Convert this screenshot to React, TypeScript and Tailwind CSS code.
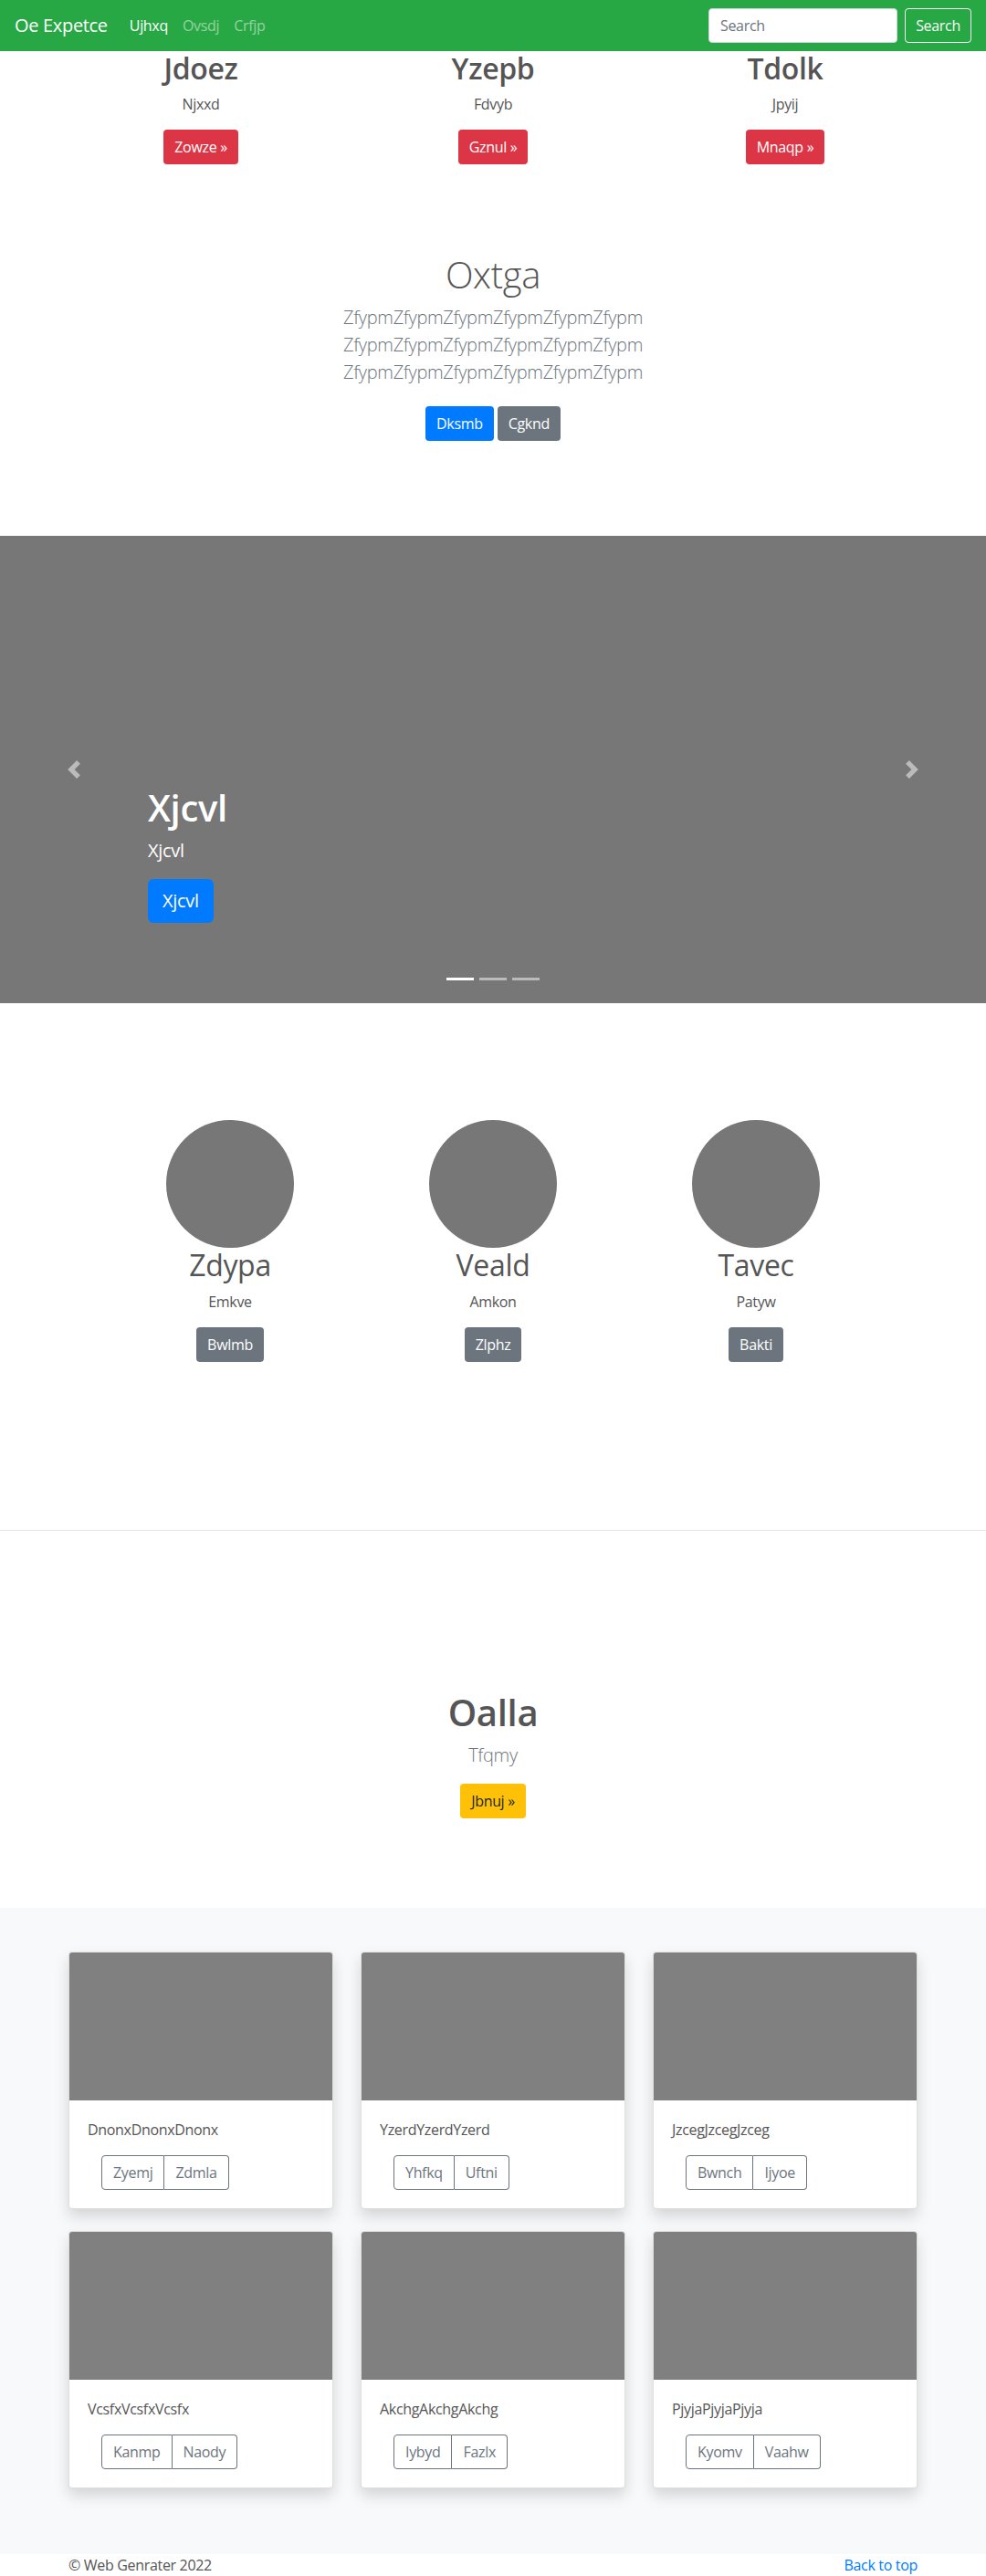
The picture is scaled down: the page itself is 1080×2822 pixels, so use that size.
import React from "react";

const cols = [
  { t: "Jdoez", s: "Njxxd", b: "Zowze" },
  { t: "Yzepb", s: "Fdvyb", b: "Gznul" },
  { t: "Tdolk", s: "Jpyij", b: "Mnaqp" },
];

const circles = [
  { t: "Zdypa", s: "Emkve", b: "Bwlmb" },
  { t: "Veald", s: "Amkon", b: "Zlphz" },
  { t: "Tavec", s: "Patyw", b: "Bakti" },
];

const cards = [
  { t: "DnonxDnonxDnonx", a: "Zyemj", b: "Zdmla" },
  { t: "YzerdYzerdYzerd", a: "Yhfkq", b: "Uftni" },
  { t: "JzcegJzcegJzceg", a: "Bwnch", b: "Ijyoe" },
  { t: "VcsfxVcsfxVcsfx", a: "Kanmp", b: "Naody" },
  { t: "AkchgAkchgAkchg", a: "Iybyd", b: "Fazlx" },
  { t: "PjyjaPjyjaPjyja", a: "Kyomv", b: "Vaahw" },
];

function Nav() {
  return (
    <nav className="h-[56px] bg-[#28a745] flex items-center px-4">
      <span className="text-[20px] leading-[30px] text-white mr-4">Oe Expetce</span>
      <ul className="flex items-center">
        <li className="px-2 text-white font-medium">Ujhxq</li>
        <li className="px-2 text-white/50">Ovsdj</li>
        <li className="px-2 text-white/50">Crfjp</li>
      </ul>
      <div className="ml-auto flex items-center">
        <div className="w-[207px] h-[38px] rounded bg-white border border-[#ced4da] px-3 flex items-center text-[#6c757d]">
          Search
        </div>
        <div className="ml-2 w-[73px] h-[38px] rounded border border-[#f8f9fa] text-[#f8f9fa] flex items-center justify-center">
          Search
        </div>
      </div>
    </nav>
  );
}

function Chevron({ dir }: { dir: "l" | "r" }) {
  return (
    <svg width="20" height="20" viewBox="0 0 8 8" className="opacity-50">
      <path
        fill="#fff"
        d={
          dir === "l"
            ? "M5.25 0l-4 4 4 4 1.5-1.5L4.25 4l2.5-2.5L5.25 0z"
            : "M2.75 0l-1.5 1.5L3.75 4l-2.5 2.5L2.75 8l4-4-4-4z"
        }
      />
    </svg>
  );
}

export default function App() {
  return (
    <div className="min-h-screen bg-white font-['Open_Sans','Noto_Sans',sans-serif] text-[16px] leading-[1.5] tracking-[-0.02em] text-[#555]">
      <Nav />

      <section className="w-[960px] mx-auto grid grid-cols-3 text-center">
        {cols.map((c) => (
          <div key={c.t} className="px-[15px]">
            <h2 className="text-[32px] leading-[1.2] font-semibold">{c.t}</h2>
            <p className="mt-2">{c.s}</p>
            <div className="mt-4 flex justify-center">
              <span className="h-[38px] px-3 rounded bg-[#dc3545] text-white flex items-center">
                {c.b} »
              </span>
            </div>
          </div>
        ))}
      </section>

      <section className="pt-[97px] text-center">
        <h1 className="text-[40px] leading-[1.2] font-light">Oxtga</h1>
        <p className="mt-2 text-[20px] leading-[30px] font-light text-[#6c757d]">
          <span className="block">ZfypmZfypmZfypmZfypmZfypmZfypm</span>
          <span className="block">ZfypmZfypmZfypmZfypmZfypmZfypm</span>
          <span className="block">ZfypmZfypmZfypmZfypmZfypmZfypm</span>
        </p>
        <div className="mt-[22px] flex justify-center gap-1">
          <span className="h-[38px] px-3 rounded bg-[#007bff] text-white flex items-center">Dksmb</span>
          <span className="h-[38px] px-3 rounded bg-[#6c757d] text-white flex items-center">Cgknd</span>
        </div>
      </section>

      <section className="relative mt-[104px] h-[512px] bg-[#777]">
        <div className="absolute left-0 top-0 bottom-0 w-[15%] flex items-center justify-center">
          <Chevron dir="l" />
        </div>
        <div className="absolute right-0 top-0 bottom-0 w-[15%] flex items-center justify-center">
          <Chevron dir="r" />
        </div>
        <div className="absolute left-[162px] top-[274px] text-white">
          <h1 className="text-[40px] leading-[1.2] font-semibold">Xjcvl</h1>
          <p className="mt-2 text-[20px] leading-[30px]">Xjcvl</p>
          <div className="mt-4 flex">
            <span className="h-[48px] px-4 rounded-md bg-[#007bff] text-white text-[20px] flex items-center">
              Xjcvl
            </span>
          </div>
        </div>
        <div className="absolute left-0 right-0 top-[484px] flex justify-center">
          <span className="mx-[3px] w-[30px] h-[3px] bg-white" />
          <span className="mx-[3px] w-[30px] h-[3px] bg-white/50" />
          <span className="mx-[3px] w-[30px] h-[3px] bg-white/50" />
        </div>
      </section>

      <section className="pt-[128px] w-[864px] mx-auto grid grid-cols-3 text-center">
        {circles.map((c) => (
          <div key={c.t} className="flex flex-col items-center">
            <div className="w-[140px] h-[140px] rounded-full bg-[#777]" />
            <h2 className="text-[32px] leading-[1.2] font-normal">{c.t}</h2>
            <p className="mt-2">{c.s}</p>
            <div className="mt-4 flex justify-center">
              <span className="h-[38px] px-3 rounded bg-[#6c757d] text-white flex items-center">{c.b}</span>
            </div>
          </div>
        ))}
      </section>

      <div className="mt-[184px] h-px bg-[#e5e5e5]" />

      <section className="pt-[175px] text-center">
        <h1 className="text-[40px] leading-[1.2] font-semibold">Oalla</h1>
        <p className="mt-2 text-[20px] leading-[30px] font-light text-[#6c757d]">Tfqmy</p>
        <div className="mt-4 flex justify-center">
          <span className="h-[38px] px-3 rounded bg-[#ffc107] text-[#212529] flex items-center">Jbnuj »</span>
        </div>
      </section>

      <section className="mt-[98px] bg-[#f8f9fa] py-12">
        <div className="w-[960px] mx-auto grid grid-cols-3">
          {cards.map((c) => (
            <div key={c.t} className="px-[15px] mb-6">
              <div className="rounded border border-black/[0.125] bg-white overflow-hidden shadow-[0_8px_16px_rgba(0,0,0,0.15)]">
                <div className="h-[162px] bg-[#808080]" />
                <div className="p-5">
                  <p>{c.t}</p>
                  <div className="mt-4 ml-[15px] flex">
                    <span className="h-[38px] px-3 border border-[#6c757d] rounded-l text-[#6c757d] flex items-center">
                      {c.a}
                    </span>
                    <span className="h-[38px] px-3 border border-l-0 border-[#6c757d] rounded-r text-[#6c757d] flex items-center">
                      {c.b}
                    </span>
                  </div>
                </div>
              </div>
            </div>
          ))}
        </div>
      </section>

      <footer className="w-[960px] mx-auto px-[15px] flex justify-between">
        <p>© Web Genrater 2022</p>
        <p className="text-[#007bff]">Back to top</p>
      </footer>
    </div>
  );
}
